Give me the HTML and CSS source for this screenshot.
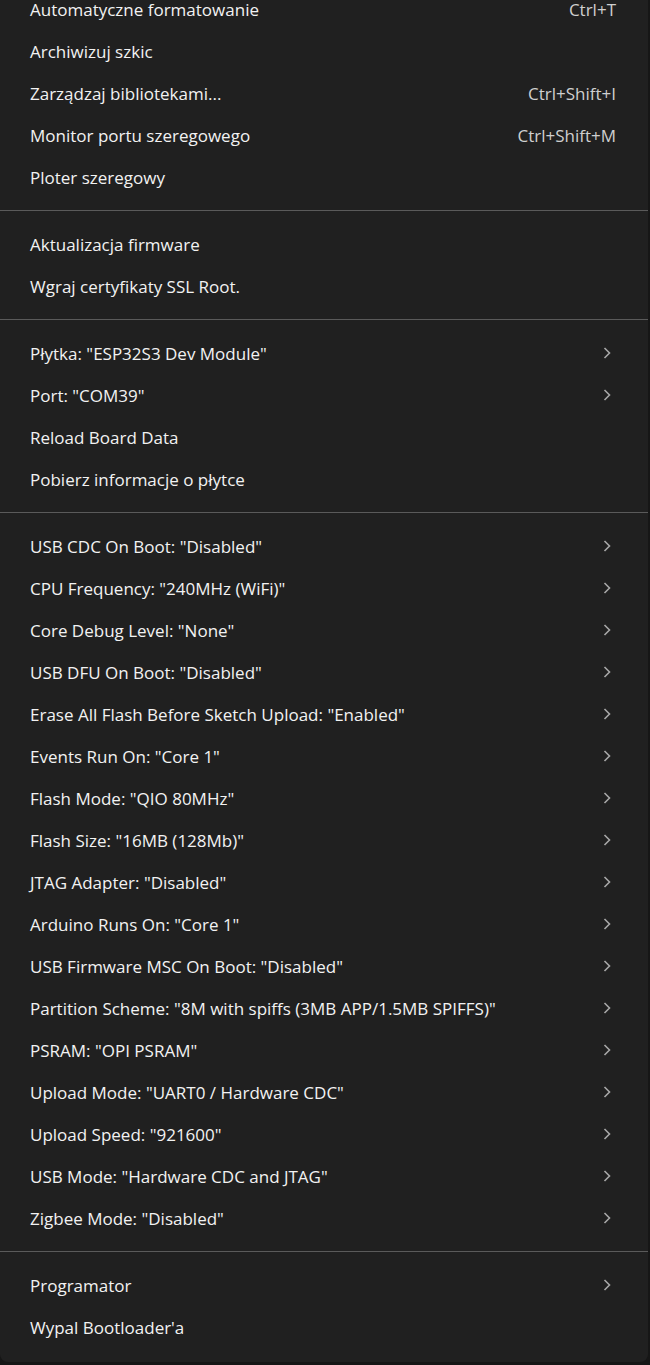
FILE: index.html
```html
<!DOCTYPE html>
<html lang="pl">
<head>
<meta charset="utf-8">
<title>Menu</title>
<link rel="stylesheet" href="styles.css">
</head>
<body>
<svg width="0" height="0" class="defs">
  <defs>
    <symbol id="chev" viewBox="0 0 8 12"><path d="M1.5 1 L6.5 6 L1.5 11" fill="none" stroke="currentColor" stroke-width="1.6"/></symbol>
  </defs>
</svg>
<div class="menu">
  <div class="group">
    <div class="item"><span class="label">Automatyczne formatowanie</span><span class="key">Ctrl+T</span></div>
    <div class="item"><span class="label">Archiwizuj szkic</span></div>
    <div class="item"><span class="label">Zarządzaj bibliotekami...</span><span class="key">Ctrl+Shift+I</span></div>
    <div class="item"><span class="label">Monitor portu szeregowego</span><span class="key">Ctrl+Shift+M</span></div>
    <div class="item"><span class="label">Ploter szeregowy</span></div>
  </div>
  <div class="sep"></div>
  <div class="group">
    <div class="item"><span class="label">Aktualizacja firmware</span></div>
    <div class="item"><span class="label">Wgraj certyfikaty SSL Root.</span></div>
  </div>
  <div class="sep"></div>
  <div class="group">
    <div class="item"><span class="label">Płytka: "ESP32S3 Dev Module"</span><svg class="chev"><use href="#chev"/></svg></div>
    <div class="item"><span class="label">Port: "COM39"</span><svg class="chev"><use href="#chev"/></svg></div>
    <div class="item"><span class="label">Reload Board Data</span></div>
    <div class="item"><span class="label">Pobierz informacje o płytce</span></div>
  </div>
  <div class="sep"></div>
  <div class="group">
    <div class="item"><span class="label">USB CDC On Boot: "Disabled"</span><svg class="chev"><use href="#chev"/></svg></div>
    <div class="item"><span class="label">CPU Frequency: "240MHz (WiFi)"</span><svg class="chev"><use href="#chev"/></svg></div>
    <div class="item"><span class="label">Core Debug Level: "None"</span><svg class="chev"><use href="#chev"/></svg></div>
    <div class="item"><span class="label">USB DFU On Boot: "Disabled"</span><svg class="chev"><use href="#chev"/></svg></div>
    <div class="item"><span class="label">Erase All Flash Before Sketch Upload: "Enabled"</span><svg class="chev"><use href="#chev"/></svg></div>
    <div class="item"><span class="label">Events Run On: "Core 1"</span><svg class="chev"><use href="#chev"/></svg></div>
    <div class="item"><span class="label">Flash Mode: "QIO 80MHz"</span><svg class="chev"><use href="#chev"/></svg></div>
    <div class="item"><span class="label">Flash Size: "16MB (128Mb)"</span><svg class="chev"><use href="#chev"/></svg></div>
    <div class="item"><span class="label">JTAG Adapter: "Disabled"</span><svg class="chev"><use href="#chev"/></svg></div>
    <div class="item"><span class="label">Arduino Runs On: "Core 1"</span><svg class="chev"><use href="#chev"/></svg></div>
    <div class="item"><span class="label">USB Firmware MSC On Boot: "Disabled"</span><svg class="chev"><use href="#chev"/></svg></div>
    <div class="item"><span class="label">Partition Scheme: "8M with spiffs (3MB APP/1.5MB SPIFFS)"</span><svg class="chev"><use href="#chev"/></svg></div>
    <div class="item"><span class="label">PSRAM: "OPI PSRAM"</span><svg class="chev"><use href="#chev"/></svg></div>
    <div class="item"><span class="label">Upload Mode: "UART0 / Hardware CDC"</span><svg class="chev"><use href="#chev"/></svg></div>
    <div class="item"><span class="label">Upload Speed: "921600"</span><svg class="chev"><use href="#chev"/></svg></div>
    <div class="item"><span class="label">USB Mode: "Hardware CDC and JTAG"</span><svg class="chev"><use href="#chev"/></svg></div>
    <div class="item"><span class="label">Zigbee Mode: "Disabled"</span><svg class="chev"><use href="#chev"/></svg></div>
  </div>
  <div class="sep"></div>
  <div class="group">
    <div class="item"><span class="label">Programator</span><svg class="chev"><use href="#chev"/></svg></div>
    <div class="item"><span class="label">Wypal Bootloader'a</span></div>
  </div>
</div>
</body>
</html>
```
FILE: styles.css
```css
html, body {
  margin: 0;
  padding: 0;
  background: #161616;
  overflow: hidden;
}
.defs {
  position: absolute;
  width: 0;
  height: 0;
}
.menu {
  width: 648px;
  margin-top: -11px;
  padding-bottom: 13px;
  background: #202020;
  border-radius: 0 0 8px 8px;
  font-family: "Open Sans", "Noto Sans", sans-serif;
  font-size: 17px;
  color: #f2f2f2;
}
.item {
  box-sizing: border-box;
  height: 42px;
  display: flex;
  align-items: center;
  padding: 0 32px 2px 30px;
}
.label {
  flex: 1;
  white-space: nowrap;
}
.key {
  color: #cfcfcf;
}
.chev {
  width: 8px;
  height: 12px;
  color: #a8a8a8;
  margin-right: 5px;
}
.sep {
  height: 1px;
  background: #5a5a5a;
  margin: 11px 0 13px;
}
```
